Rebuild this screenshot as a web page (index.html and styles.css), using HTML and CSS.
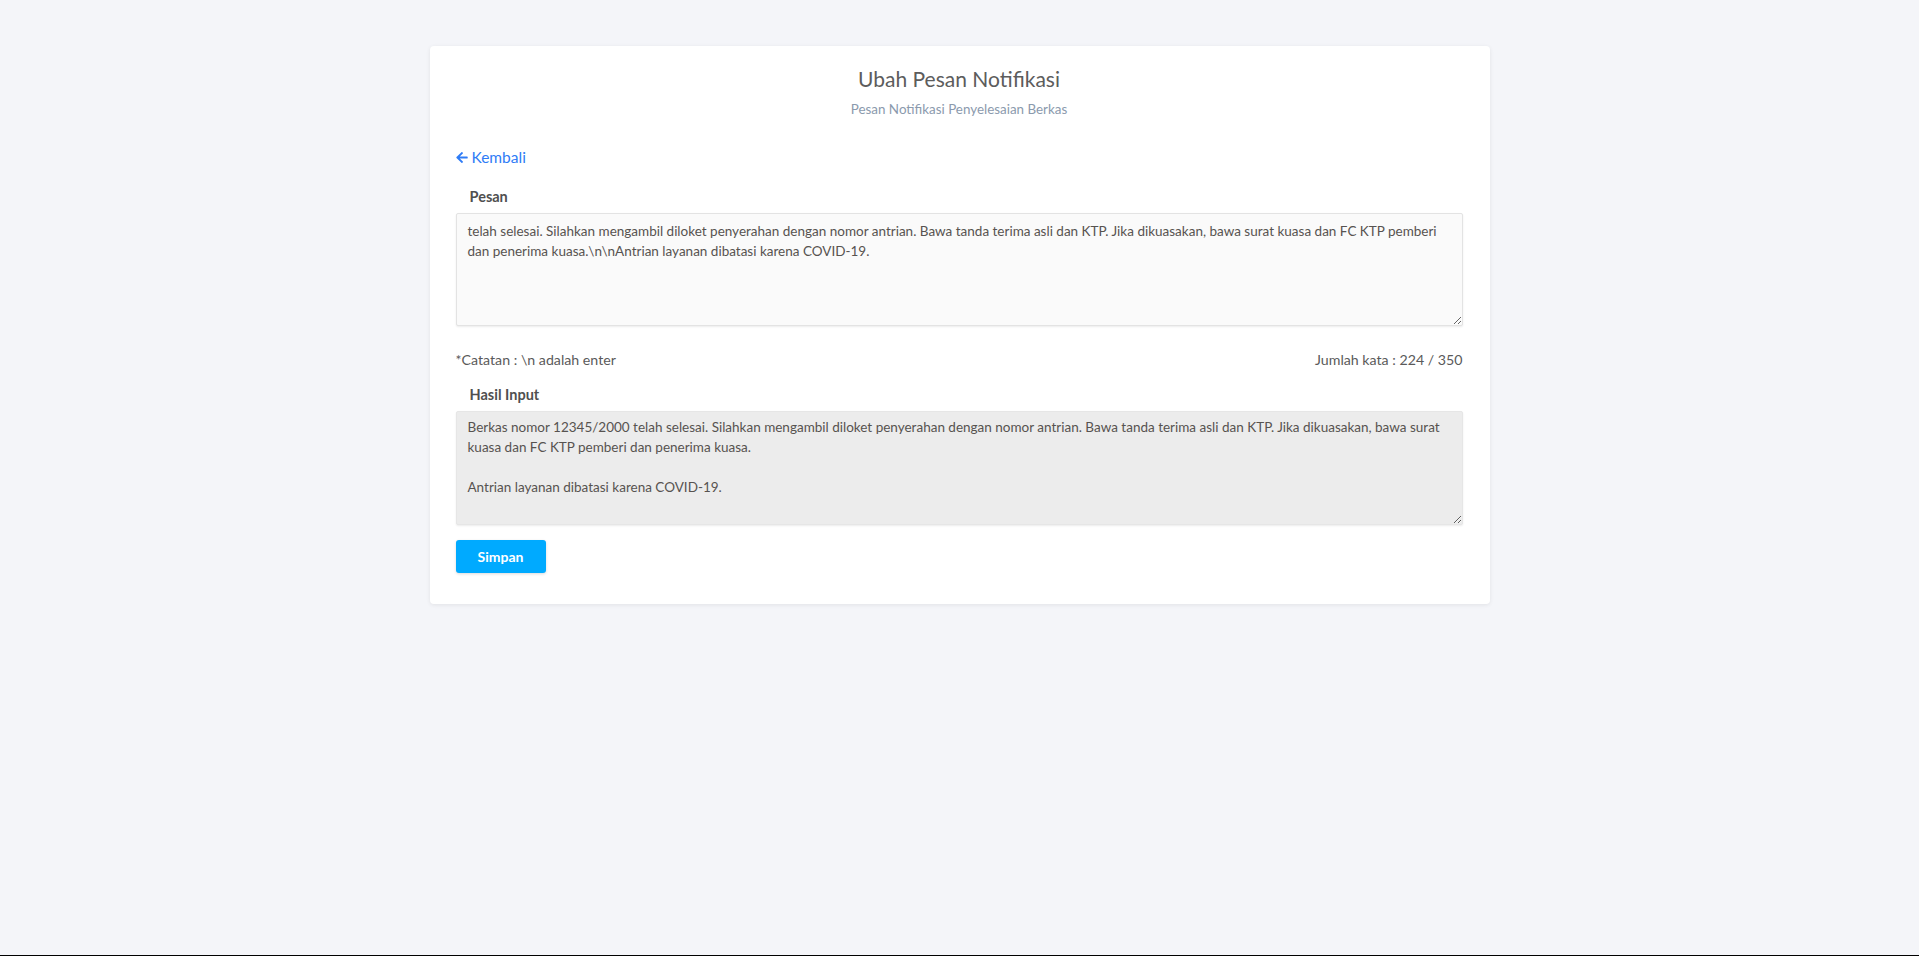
FILE: index.html
```html
<!DOCTYPE html>
<html lang="id">
<head>
<meta charset="utf-8">
<title>Ubah Pesan Notifikasi</title>
<link rel="stylesheet" href="styles.css">
</head>
<body>
<main class="page">
  <section class="card">
    <header class="card-head">
      <h1 class="title">Ubah Pesan Notifikasi</h1>
      <p class="subtitle">Pesan Notifikasi Penyelesaian Berkas</p>
    </header>
    <a class="back" href="#">
      <svg class="back-icon" viewBox="0 0 448 512" aria-hidden="true"><path d="M257.5 445.1l-22.2 22.2c-9.4 9.4-24.6 9.4-33.9 0L7 273c-9.4-9.4-9.4-24.6 0-33.9L201.4 44.7c9.4-9.4 24.6-9.4 33.9 0l22.2 22.2c9.5 9.5 9.3 25-.4 34.3L136.6 216H424c13.3 0 24 10.7 24 24v32c0 13.3-10.7 24-24 24H136.6l120.5 114.8c9.8 9.3 10 24.8.4 34.3z"/></svg>
      <span>Kembali</span>
    </a>
    <form class="form">
      <label class="label" for="pesan">Pesan</label>
      <textarea id="pesan" class="field field-input">telah selesai. Silahkan mengambil diloket penyerahan dengan nomor antrian. Bawa tanda terima asli dan KTP. Jika dikuasakan, bawa surat kuasa dan FC KTP pemberi dan penerima kuasa.\n\nAntrian layanan dibatasi karena COVID-19.</textarea>
      <div class="meta">
        <span>*Catatan : \n adalah enter</span>
        <span>Jumlah kata : 224 / 350</span>
      </div>
      <label class="label" for="hasil">Hasil Input</label>
      <textarea id="hasil" class="field field-result" readonly>Berkas nomor 12345/2000 telah selesai. Silahkan mengambil diloket penyerahan dengan nomor antrian. Bawa tanda terima asli dan KTP. Jika dikuasakan, bawa surat kuasa dan FC KTP pemberi dan penerima kuasa.

Antrian layanan dibatasi karena COVID-19.</textarea>
      <div class="actions">
        <button type="button" class="btn">Simpan</button>
      </div>
    </form>
  </section>
</main>
</body>
</html>
```

FILE: styles.css
```css
* { box-sizing: border-box; }
html, body { margin: 0; padding: 0; }
body {
  background: #f4f5f9;
  font-family: "Lato", "Open Sans", sans-serif;
  color: #5a5a5a;
  min-height: 956px;
  border-bottom: 1px solid #000;
}
.page {
  display: flex;
  justify-content: center;
  padding-top: 46px;
}
.card {
  width: 1060px;
  background: #fff;
  border-radius: 4px;
  box-shadow: 0 1px 4px rgba(0,0,0,0.08);
  padding: 18px 27px 31px 26px;
  display: flex;
  flex-direction: column;
}
.card-head { text-align: center; }
.title {
  margin: 0;
  font-size: 21px;
  line-height: 30px;
  font-weight: 400;
  color: #5c5c5c;
}
.subtitle {
  margin: 6px 0 0;
  font-size: 13.4px;
  line-height: 18px;
  color: #8b9aad;
}
.back {
  margin-top: 29px;
  align-self: flex-start;
  display: inline-flex;
  align-items: center;
  gap: 4px;
  color: #2f7cf6;
  text-decoration: none;
  font-size: 15.5px;
  line-height: 20px;
}
.back-icon { width: 12px; height: 13px; fill: #2f7cf6; }
.form { display: flex; flex-direction: column; margin-top: 20px; }
.label {
  font-size: 14.5px;
  line-height: 20px;
  font-weight: 700;
  color: #4f4f4f;
  padding-left: 14px;
  margin-bottom: 6px;
}
.field {
  width: 100%;
  font-family: inherit;
  font-size: 13.5px;
  line-height: 20px;
  color: #575350;
  border: 1px solid #e3e3e3;
  border-radius: 2px;
  box-shadow: 0 1px 2px rgba(0,0,0,0.08);
  padding: 6px 11px;
  resize: vertical;
  margin: 0;
  display: block;
}
.field-input { height: 113px; background: #fafafa; padding-top: 7px; }
.field-result { height: 114px; background: #ececec; border-color: #e6e6e6; padding-top: 5px; }
.meta {
  display: flex;
  justify-content: space-between;
  font-size: 14.2px;
  line-height: 20px;
  color: #5a5a5a;
  margin: 24px 0 15px;
}
.actions { margin-top: 15px; }
.btn {
  width: 90px;
  height: 33px;
  background: #00aaff;
  color: #fff;
  border: 0;
  border-radius: 3px;
  font-family: inherit;
  font-size: 14px;
  font-weight: 700;
  box-shadow: 0 1px 3px rgba(0,0,0,0.15);
}
```
